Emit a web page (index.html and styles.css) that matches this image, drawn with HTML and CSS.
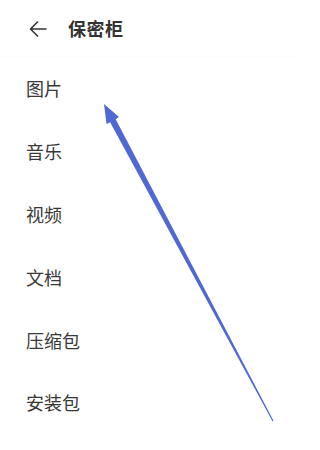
FILE: index.html
```html
<!DOCTYPE html>
<html lang="zh">
<head>
<meta charset="utf-8">
<link rel="stylesheet" href="styles.css">
</head>
<body>
<div class="page">
  <header class="topbar">
    <svg class="back" width="18" height="16" viewBox="0 0 18 16">
      <path d="M1.5 8 H17 M8.5 1 L1.5 8 L8.5 15" fill="none" stroke="#333" stroke-width="1.6" stroke-linecap="round" stroke-linejoin="round"/>
    </svg>
    <h1 class="title">保密柜</h1>
  </header>
  <ul class="list">
    <li class="item">图片</li>
    <li class="item">音乐</li>
    <li class="item">视频</li>
    <li class="item">文档</li>
    <li class="item">压缩包</li>
    <li class="item">安装包</li>
  </ul>
  <svg class="annot" width="295" height="450" viewBox="0 0 295 450">
    <polygon fill="#4f68d4" points="104,104 119,117 115.7,119.3 273.5,420.7 272.5,421.3 110.1,122.3 106.5,124"/>
  </svg>
</div>
</body>
</html>
```
FILE: styles.css
```css
html, body {
  margin: 0;
  padding: 0;
  background: #fff;
}
.page {
  position: relative;
  width: 295px;
  height: 450px;
  overflow: hidden;
  font-family: "Noto Sans CJK SC", "Noto Sans", sans-serif;
  color: #333;
}
.topbar {
  height: 57px;
  display: flex;
  align-items: center;
  padding-left: 29px;
  gap: 21px;
  box-sizing: border-box;
  border-bottom: 1px solid #fbfbfb;
}
.back {
  display: block;
  margin-top: 1px;
}
.title {
  margin: 0;
  font-size: 18px;
  font-weight: 700;
  color: #333;
  letter-spacing: 0.5px;
}
.list {
  list-style: none;
  margin: 0;
  padding: 0;
}
.item {
  height: 62.8px;
  display: flex;
  align-items: center;
  padding-left: 26px;
  font-size: 18px;
  color: #383838;
}
.annot {
  position: absolute;
  left: 0;
  top: 0;
  pointer-events: none;
}
```
